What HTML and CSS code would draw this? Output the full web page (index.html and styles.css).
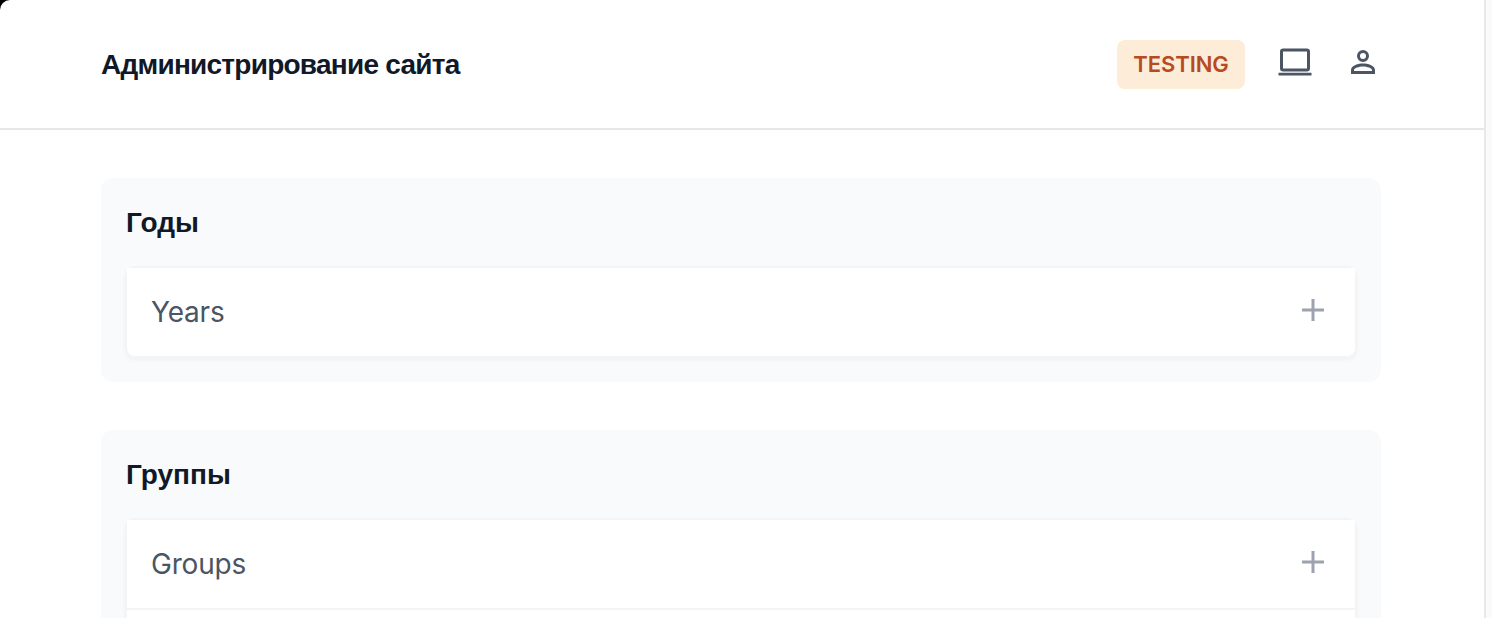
FILE: index.html
```
<!DOCTYPE html>
<html lang="ru">
<head>
<meta charset="utf-8">
<title>Администрирование сайта</title>
<link rel="stylesheet" href="styles.css">
</head>
<body>
<div class="window">
<header class="header">
<h1 class="title">Администрирование сайта</h1>
<div class="actions">
<span class="badge">TESTING</span>
<svg class="laptop" viewBox="0 0 34 28"><rect x="3.5" y="2" width="27" height="20" rx="1.8" fill="none" stroke="currentColor" stroke-width="3"/><path d="M.5 26.2h33" stroke="currentColor" stroke-width="2.8"/></svg>
<svg class="person" viewBox="0 0 24 24"><path fill="currentColor" fill-rule="evenodd" d="M12 0a6 6 0 1 1 0 12a6 6 0 0 1 0-12zm0 3a3 3 0 1 0 0 6a3 3 0 0 0 0-6zM0 24v-4C0 15.4 7.5 13.5 12 13.5s12 1.9 12 6.5V24zm3-3h18v-1c0-1.6-5-3.4-9-3.4s-9 1.800-9 3.400z"/></svg>
</div>
</header>
<main class="content">
<section class="group">
<h2 class="group-title">Годы</h2>
<div class="card"><div class="row"><a class="name">Years</a><svg class="plus" viewBox="0 0 22 22"><path d="M11 0v22M0 11h22" stroke="currentColor" stroke-width="3"/></svg></div></div>
</section>
<section class="group">
<h2 class="group-title">Группы</h2>
<div class="card"><div class="row"><a class="name">Groups</a><svg class="plus" viewBox="0 0 22 22"><path d="M11 0v22M0 11h22" stroke="currentColor" stroke-width="3"/></svg></div><div class="row"></div></div>
</section>
</main>
</div>
</body>
</html>
```
FILE: styles.css
```
* { box-sizing: border-box; }
html { background: #000; }
body { margin: 0; height: 618px; overflow: hidden; font-family: Inter, sans-serif; background: #000; }
.window { height: 618px; overflow: hidden; background: linear-gradient(to right, #fff calc(100% - 8px), #e8e8e8 calc(100% - 8px), #e8e8e8 calc(100% - 6px), #fafafa calc(100% - 6px)); border-top-left-radius: 10px; padding-right: 8px; }
.header { height: 130px; display: flex; align-items: center; justify-content: space-between; padding: 0 109px 0 101px; border-bottom: 2px solid #e5e7eb; }
.title { margin: 0; font-family: "Liberation Sans", sans-serif; font-size: 28px; line-height: 40px; padding-top: 1px; font-weight: 700; letter-spacing: -0.75px; color: #111827; }
.actions { display: flex; align-items: center; color: #4b5563; }
.badge { width: 128px; height: 49px; display: flex; align-items: center; justify-content: center; border-radius: 8px; background: #fdecd7; color: #b74a20; font-size: 22px; font-weight: 600; letter-spacing: -.05px; }
.laptop { width: 34px; height: 28px; margin: 0 39px 4px 33px; }
.person { width: 24px; height: 24px; margin-bottom: 4px; }
.content { padding: 48px 103px 0 101px; }
.group { background: #f9fafb; border-radius: 12px; padding: 24px; margin-bottom: 48px; }
.group-title { margin: 0 0 24px; padding: 1px 0 0 1px; font-family: "Liberation Sans", sans-serif; font-size: 28px; line-height: 39px; font-weight: 700; color: #111827; }
.card { border: 2px solid #f3f4f6; border-radius: 10px; box-shadow: 0 2px 4px rgba(0,0,0,.04); }
.row { height: 90px; display: flex; align-items: center; justify-content: space-between; padding: 0 31px 0 24px; background: #fff; border-bottom: 2px solid #f3f4f6; }
.row:last-child { height: 88px; border-bottom: 0; border-radius: 0 0 8px 8px; }
.name { font-size: 28px; letter-spacing: -.2px; color: #4b5563; }
.plus { width: 22px; height: 22px; margin-bottom: 4px; color: #9ca3af; }
```
